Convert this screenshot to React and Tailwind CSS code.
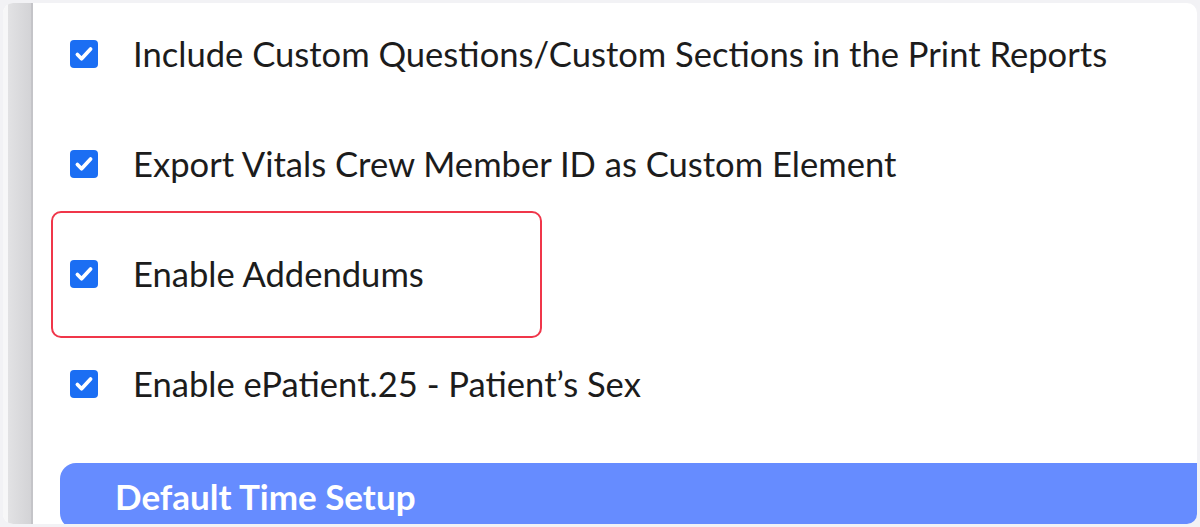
import React from "react";

function Check() {
  return (
    <div className="w-[28px] h-[28px] rounded-[4px] bg-[#1b6ef3] flex items-center justify-center shrink-0">
      <svg width="22" height="22" viewBox="0 0 20 20" fill="none">
        <path d="M4 10.5l3.8 3.8L16 5.5" stroke="white" strokeWidth="3.4" strokeLinecap="round" strokeLinejoin="round" />
      </svg>
    </div>
  );
}

const rows = [
  "Include Custom Questions/Custom Sections in the Print Reports",
  "Export Vitals Crew Member ID as Custom Element",
  "Enable Addendums",
  "Enable ePatient.25 - Patient\u2019s Sex",
];

export default function App() {
  return (
    <div className="w-[1200px] h-[527px] bg-[#f2f2f5] p-[3px]" style={{ fontFamily: "Lato, 'Open Sans', sans-serif" }}>
      <div className="w-full h-full bg-white rounded-[10px] overflow-hidden flex">
        <div className="w-[30px] h-full flex shrink-0">
          <div className="w-[5px] bg-[#f7f7f8]"></div>
          <div className="flex-1 bg-gradient-to-r from-[#e2e2e4] to-[#d3d3d6]"></div>
          <div className="w-[2px] bg-[#c4c4c8]"></div>
        </div>
        <div className="relative flex-1 flex flex-col pt-[36px]">
          <div className="flex flex-col gap-[80px] pl-[37px]">
            {rows.map((r) => (
              <div key={r} className="h-[30px] flex items-center gap-[35px]">
                <Check />
                <span className="text-[34.6px] text-[#1c1c1c] leading-none whitespace-nowrap">{r}</span>
              </div>
            ))}
          </div>
          <div className="absolute left-[18px] top-[208px] w-[491px] h-[127px] border-[2.5px] border-[#f0364a] rounded-[10px]"></div>
          <div className="mt-[64px] ml-[27px] h-[66px] shrink-0 bg-[#668cff] rounded-l-[16px] flex items-center pl-[55px]">
            <span className="text-[35px] font-bold text-white leading-none">Default Time Setup</span>
          </div>
        </div>
      </div>
    </div>
  );
}
